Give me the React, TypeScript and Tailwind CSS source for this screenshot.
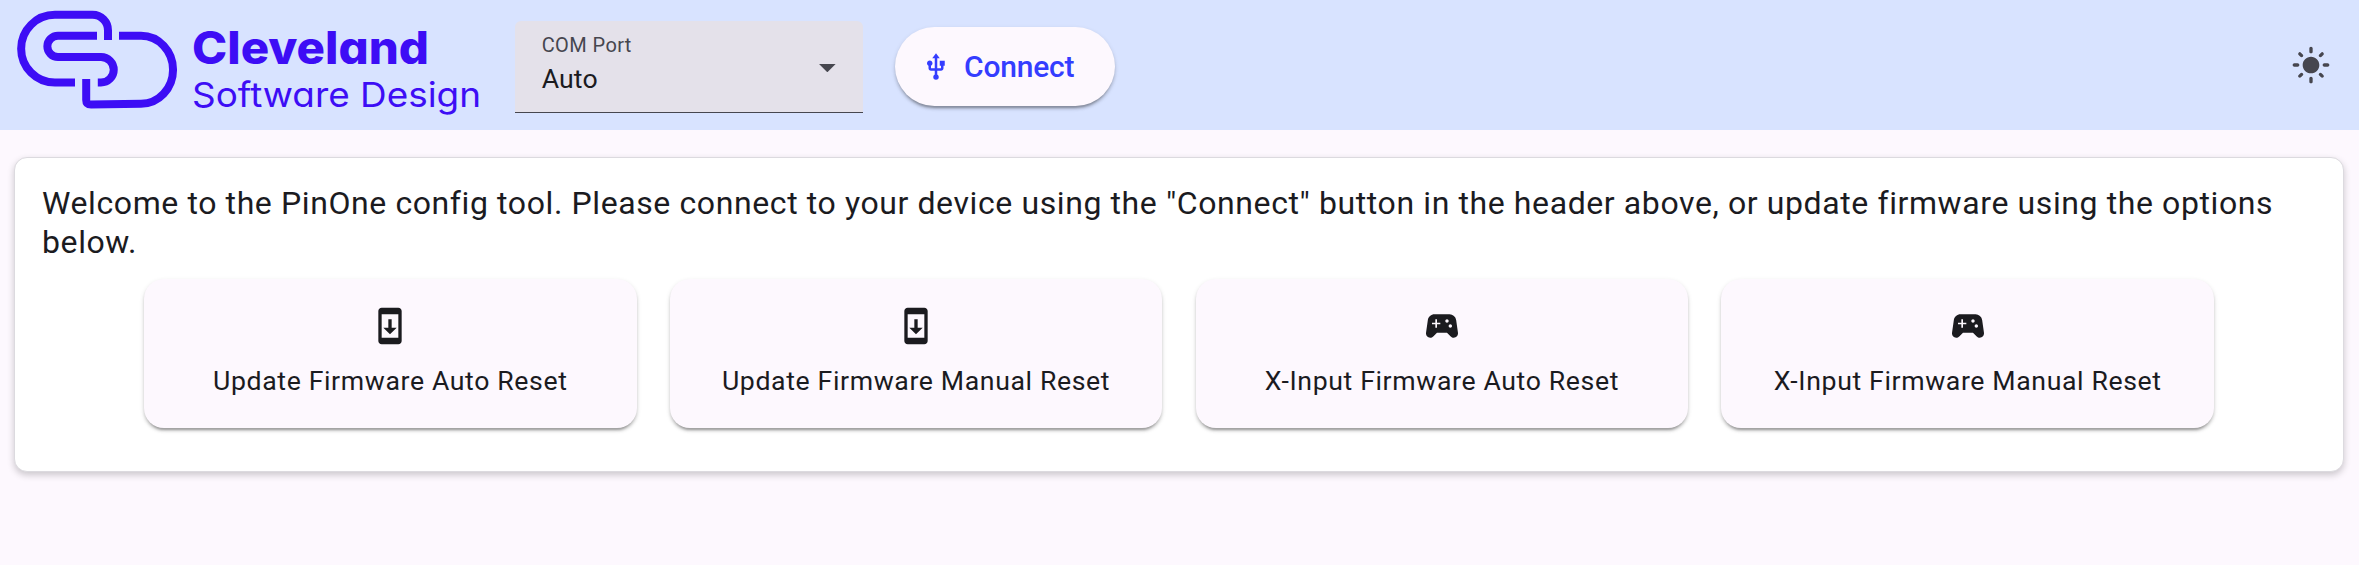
import React from "react";
import { MdUsb, MdSystemUpdate, MdSportsEsports, MdLightMode } from "react-icons/md";
import type { IconType } from "react-icons";

const actions: { label: string; icon: IconType }[] = [
  { label: "Update Firmware Auto Reset", icon: MdSystemUpdate },
  { label: "Update Firmware Manual Reset", icon: MdSystemUpdate },
  { label: "X-Input Firmware Auto Reset", icon: MdSportsEsports },
  { label: "X-Input Firmware Manual Reset", icon: MdSportsEsports },
];

function Logo() {
  return (
    <svg
      className="block h-[130px] w-[515px] shrink-0"
      viewBox="0 0 515 130"
      role="img"
      aria-label="Cleveland Software Design"
    >
      <g fill="none" stroke="#3d0df5" strokeWidth="8">
        <path d="M108 40V30.500A15.500 15.500 0 0 0 92.500 14.800H55A33.850 33.850 0 0 0 55 82.500H75" />
        <path d="M97 35.700H58A10.650 10.650 0 0 0 58 57H101A12.750 12.750 0 0 1 101 82.500H97.800" />
        <path d="M119 35.700H141A32 34 0 0 1 141 103.800L91 104.500Q86.200 104.500 86.200 100V79" />
      </g>
      <g fill="#3d0df5" className="font-['Inter',sans-serif] [font-feature-settings:'cv11']">
        <text x="192" y="64" fontSize="45" fontWeight="800" textLength="237" lengthAdjust="spacingAndGlyphs">
          Cleveland
        </text>
        <text x="192" y="106.500" fontSize="34.500" fontWeight="400" textLength="289" lengthAdjust="spacingAndGlyphs">
          Software Design
        </text>
      </g>
    </svg>
  );
}

export default function App() {
  return (
    <div className="min-h-[565px] bg-[#fdf8fe] font-['Roboto',sans-serif] text-[#1b1b1f]">
      <header className="flex h-[130px] items-center bg-[#d8e3ff]">
        <Logo />
        <div className="mt-[4px] flex h-[92px] w-[348px] items-center justify-between rounded-t-[6px] border-b border-[#46464f] bg-[#e4e1ea] pr-[27px] pl-[26.700px]">
          <div className="flex flex-col pb-[4px]">
            <span className="mt-[2px] text-[20px] leading-[27px] tracking-[0.400px] text-[#46464f]">COM Port</span>
            <span className="text-[26.670px] leading-[40px] tracking-[0.100px]">Auto</span>
          </div>
          <svg className="mt-[3px] h-[8.300px] w-[16.700px]" viewBox="0 0 10 5" fill="#46464f">
            <path d="M0 0l5 5 5-5z" />
          </svg>
        </div>
        <button className="mt-[3px] ml-[32px] flex h-[79px] w-[220px] items-center rounded-[40px] bg-[#fdf8fe] pl-[26px] text-[#343dff] shadow-[0_5px_2px_-3px_rgba(0,0,0,0.2),0_3px_3px_0_rgba(0,0,0,0.14),0_2px_5px_0_rgba(0,0,0,0.12)]">
          <MdUsb size={30} />
          <span className="ml-[13px] text-[30px] font-medium tracking-[-0.200px]">Connect</span>
        </button>
        <button className="mr-[28px] ml-auto text-[#46464f]">
          <MdLightMode size={40} />
        </button>
      </header>

      <main className="mt-[27px] mr-[15px] ml-[14px] h-[315px] rounded-[13px] border border-[#dcdadf] bg-white px-[27px] pt-[26px] shadow-[0_3px_7px_rgba(0,0,0,0.2)]">
        <p className="text-[32px] leading-[39px] tracking-[0.600px]">
          Welcome to the PinOne config tool. Please connect to your device using the "Connect" button in the header above, or update firmware using the options below.
        </p>
        <div className="mt-[17px] flex justify-center gap-[33.300px]">
          {actions.map(({ label, icon: Icon }) => (
            <button
              key={label}
              className="flex h-[149px] w-[492.500px] flex-col items-center rounded-[20px] bg-[#fdf8fe] pt-[27px] shadow-[0_5px_2px_-3px_rgba(0,0,0,0.2),0_3px_3px_0_rgba(0,0,0,0.14),0_2px_5px_0_rgba(0,0,0,0.12)]"
            >
              <Icon size={40} />
              <span className="mt-[15px] text-[26.670px] leading-[40px] tracking-[0.620px]">{label}</span>
            </button>
          ))}
        </div>
      </main>
    </div>
  );
}
